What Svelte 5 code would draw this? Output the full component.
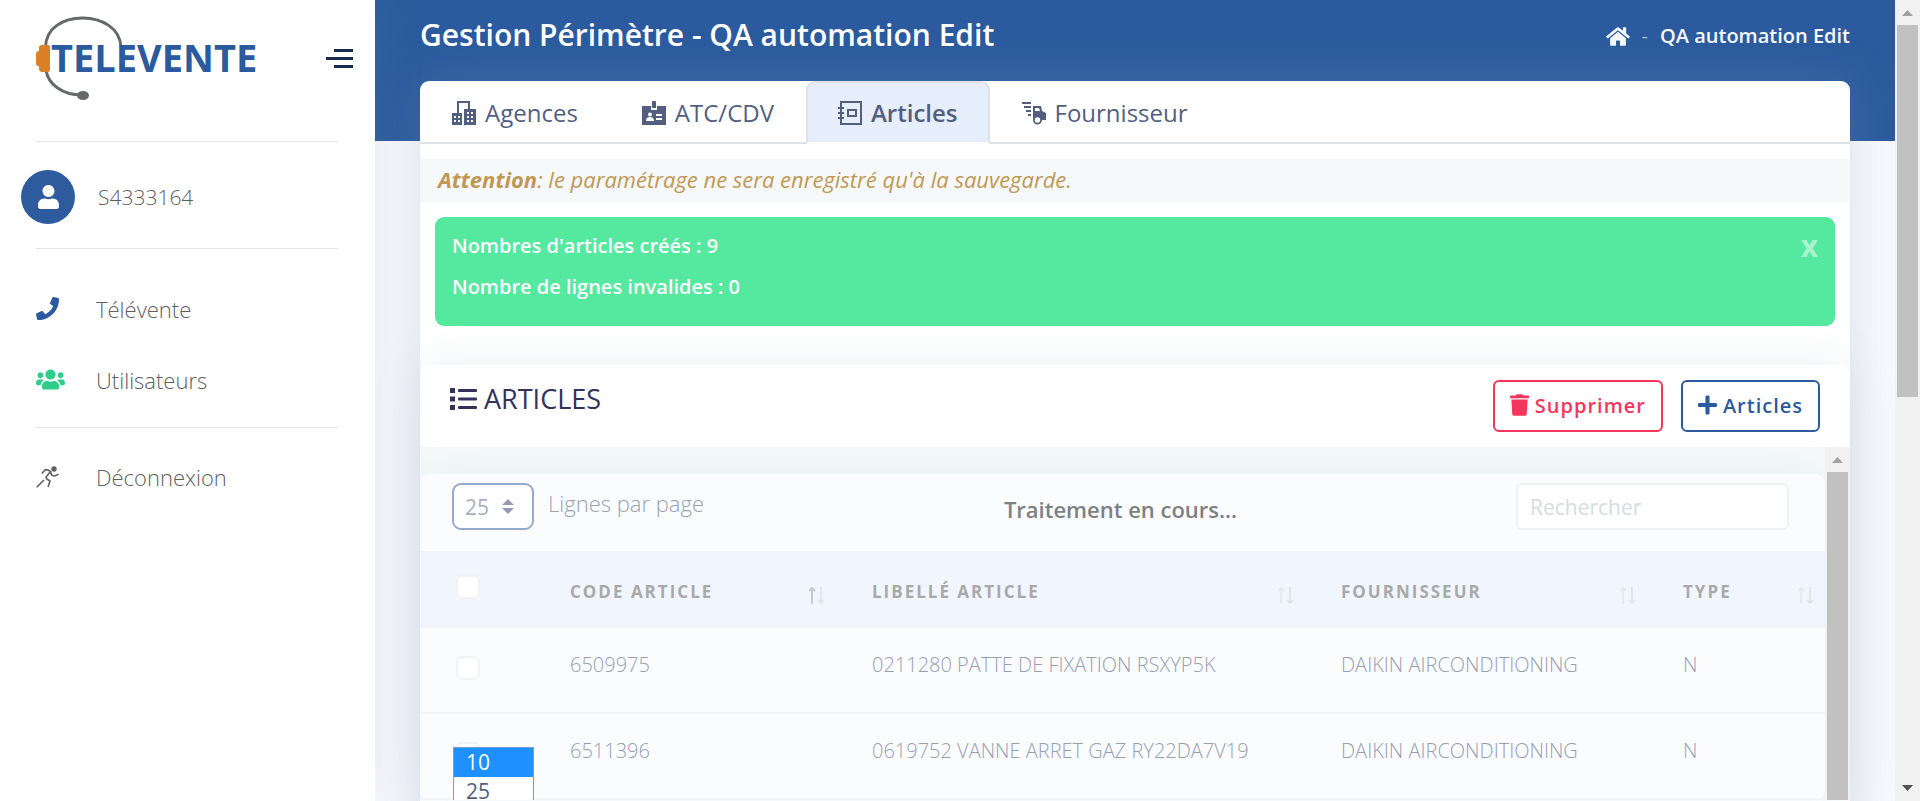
<script>
  const columns = [
    { label: 'Code article', active: true },
    { label: 'Libellé article' },
    { label: 'Fournisseur' },
    { label: 'Type' }
  ];
  const rows = [
    ['6509975', '0211280 PATTE DE FIXATION RSXYP5K', 'DAIKIN AIRCONDITIONING', 'N'],
    ['6511396', '0619752 VANNE ARRET GAZ RY22DA7V19', 'DAIKIN AIRCONDITIONING', 'N']
  ];
  let size = $state('25');
</script>

{#snippet check(id, label)}
  <input class="check" type="checkbox" {id} aria-label={label} />
{/snippet}

<div class="app">
  <aside class="sidebar">
    <div class="brand">
      <svg class="logo" viewBox="0 0 220 86" role="img" aria-label="Televente">
        <path d="M9.500 31C10 12 27 2 46.500 2S84 12 85 31" fill="none" stroke="#666869" stroke-width="3" />
        <path d="M10 54C12 68 26 79 46 79" fill="none" stroke="#666869" stroke-width="3" />
        <ellipse cx="47" cy="79.500" rx="6" ry="4.500" fill="#666869" />
        <path d="M6 29h6q2 0 2 2v22q0 3-2 3H6q-3 0-3-4v-2H2q-2 0-2-3V38q0-3 3-3v-3q0-3 3-3z" fill="#dc8023" />
        <text x="15" y="56">TELEVENTE</text>
      </svg>
      <button class="burger" aria-label="Menu"><i></i><i></i><i></i></button>
    </div>
    <hr />
    <a class="user" href="#profil">
      <span class="avatar">
        <svg width="21" height="24" viewBox="0 0 448 512"><path fill="#fff" d="M224 256c70.7 0 128-57.3 128-128S294.7 0 224 0 96 57.3 96 128s57.3 128 128 128zm89.600 32h-16.700c-22.200 10.200-46.900 16-72.900 16s-50.600-5.800-72.900-16h-16.700C60.200 288 0 348.200 0 422.400V464c0 26.500 21.500 48 48 48h352c26.500 0 48-21.500 48-48v-41.600c0-74.200-60.200-134.400-134.400-134.400z" /></svg>
      </span>
      S4333164
    </a>
    <hr />
    <nav>
      <a href="#televente">
        <span class="ico"><svg width="23" height="23" viewBox="0 0 512 512"><path fill="#2b5b9e" d="M493.4 24.6l-104-24c-11.300-2.600-22.900 3.300-27.500 13.900l-48 112c-4.200 9.800-1.400 21.300 6.900 28l60.600 49.600c-36 76.700-98.900 140.500-177.200 177.200l-49.600-60.600c-6.800-8.300-18.200-11.100-28-6.900l-112 48C3.900 366.500-2 378.100.6 389.400l24 104C27.100 504.200 36.700 512 48 512c256.100 0 464-207.500 464-464 0-11.200-7.700-20.900-18.600-23.400z" /></svg></span>
        Télévente
      </a>
      <a href="#utilisateurs">
        <span class="ico"><svg width="29" height="23" viewBox="0 0 640 512"><path fill="#2dce89" d="M96 224c35.300 0 64-28.700 64-64s-28.700-64-64-64-64 28.700-64 64 28.700 64 64 64zm448 0c35.300 0 64-28.700 64-64s-28.700-64-64-64-64 28.700-64 64 28.700 64 64 64zm32 32h-64c-17.600 0-33.500 7.100-45.100 18.600 40.300 22.100 68.900 62 75.100 109.400h66c17.700 0 32-14.300 32-32v-32c0-35.300-28.700-64-64-64zm-256 0c61.900 0 112-50.100 112-112S381.900 32 320 32 208 82.100 208 144s50.100 112 112 112zm76.800 32h-8.300c-20.800 10-43.900 16-68.500 16s-47.600-6-68.500-16h-8.300C179.600 288 128 339.600 128 403.200V432c0 26.500 21.500 48 48 48h288c26.500 0 48-21.500 48-48v-28.800c0-63.600-51.600-115.200-115.200-115.200zm-223.700-13.400C161.500 263.100 145.600 256 128 256H64c-35.300 0-64 28.700-64 64v32c0 17.700 14.300 32 32 32h65.900c6.300-47.400 34.900-87.300 75.200-109.400z" /></svg></span>
        Utilisateurs
      </a>
    </nav>
    <hr />
    <nav class="out">
      <a href="#deconnexion">
        <span class="ico"><svg width="23" height="22" viewBox="0 0 23 22" fill="none" stroke="#606060" stroke-width="1.600"><circle cx="18" cy="3" r="2.700" fill="#606060" stroke="none" /><path d="M6 7.500 8.500 4.500Q10 3 12 4L14.500 5.500 10.500 10.500Q9.500 12 11 13L14 15 12 21M14.500 5.500 15.500 9 18 10Q20 10 22.500 8M8 14 .7 21.300" /></svg></span>
        Déconnexion
      </a>
    </nav>
  </aside>

  <main>
    <header class="top">
      <h1>Gestion Périmètre - QA automation Edit</h1>
      <div class="crumbs">
        <a href="#accueil" aria-label="Accueil"><svg width="24" height="21" viewBox="0 0 576 512"><path fill="#f6f9fc" d="M280.370 148.260L96 300.110V464a16 16 0 0 0 16 16l112.060-.29a16 16 0 0 0 15.920-16V368a16 16 0 0 1 16-16h64a16 16 0 0 1 16 16v95.640a16 16 0 0 0 16 16.050L464 480a16 16 0 0 0 16-16V300L295.670 148.260a12.190 12.190 0 0 0-15.300 0zM571.600 251.470L488 182.560V44.050a12 12 0 0 0-12-12h-56a12 12 0 0 0-12 12v72.610L318.470 43a48 48 0 0 0-61 0L4.340 251.470a12 12 0 0 0-1.600 16.900l25.500 31A12 12 0 0 0 45.150 301l235.220-193.740a12.190 12.190 0 0 1 15.300 0L530.900 301a12 12 0 0 0 16.900-1.600l25.500-31a12 12 0 0 0-1.700-16.930z" /></svg></a>
        <span class="dash">-</span>
        <a href="#edit">QA automation Edit</a>
      </div>
    </header>

    <section class="card">
      <div class="tabs">
        <a href="#agences"><svg width="24" height="24" viewBox="0 0 24 24" fill="#525f7f"><path fill-rule="evenodd" d="M0 12h10v12H0zM2 15v2h2v-2zM6 15v2h2v-2zM2 19v2h2v-2zM6 19v2h2v-2zM12 8h8h4v16H12zM15 11v2h2v-2zM19 11v2h2v-2zM15 15v2h2v-2zM19 15v2h2v-2zM15 19v2h2v-2zM19 19v2h2v-2z" /><path d="M6 12V1h11v7" fill="none" stroke="#525f7f" stroke-width="2" /></svg>Agences</a>
        <a href="#atc"><svg width="24" height="24" viewBox="0 0 24 24"><path fill="#525f7f" d="M0 5h9v4h6V5h9v19H0zM10 1q0-1 1-1h2q1 0 1 1v6h-4z" /><circle cx="8" cy="13.500" r="2" fill="#fff" /><path fill="#fff" d="M4 20q0-4 4-4t4 4zM14 13h6v2h-6zM14 17h6v2h-6z" /></svg>ATC/CDV</a>
        <a href="#articles" class="active"><svg width="24" height="24" viewBox="0 0 24 24" fill="none" stroke="#525f7f" stroke-width="2"><path d="M3 1h20v22H3zM10 9h8v6h-8zM0 7h6M0 12h6M0 17h6" /></svg>Articles</a>
        <a href="#fournisseur"><svg width="24" height="24" viewBox="0 0 24 24"><path fill="#525f7f" d="M0 1h9v2H0zM2 5h7v2H2zM4 9h5v2H4zM6 13h3v2H6zM11 5h8l1 5 4 2v7h-4a4.500 4.500 0 0 1-9 0z" /><path fill="#fff" d="M13 7h4l1 3h-5z" /><circle cx="15.500" cy="19" r="2.700" fill="#fff" /></svg>Fournisseur</a>
      </div>

      <p class="warning"><strong>Attention</strong>: le paramétrage ne sera enregistré qu'à la sauvegarde.</p>

      <div class="alert" role="status">
        <div>
          <p>Nombres d'articles créés : 9</p>
          <p>Nombre de lignes invalides : 0</p>
        </div>
        <button aria-label="Fermer">x</button>
      </div>

      <section class="panel">
        <div class="panel-head">
          <h2><svg width="27" height="22" viewBox="0 0 27 22" fill="#32325d"><path d="M0 0h5v5H0zM0 8.500h5v5H0zM0 17h5v5H0z" /><rect x="8" y="1" width="19" height="3" rx="1" /><rect x="8" y="9.500" width="19" height="3" rx="1" /><rect x="8" y="18" width="19" height="3" rx="1" /></svg>ARTICLES</h2>
          <div class="actions">
            <button class="danger"><svg width="19" height="22" viewBox="0 0 448 512"><path fill="currentColor" d="M432 32H312l-9.400-18.700A24 24 0 0 0 281.100 0H166.800a23.720 23.720 0 0 0-21.400 13.300L136 32H16A16 16 0 0 0 0 48v32a16 16 0 0 0 16 16h416a16 16 0 0 0 16-16V48a16 16 0 0 0-16-16zM53.200 467a48 48 0 0 0 47.900 45h245.800a48 48 0 0 0 47.900-45L416 128H32z" /></svg>Supprimer</button>
            <button class="primary"><svg width="19" height="22" viewBox="0 0 448 512"><path fill="currentColor" d="M416 208H272V64c0-17.670-14.330-32-32-32h-32c-17.670 0-32 14.330-32 32v144H32c-17.670 0-32 14.330-32 32v32c0 17.670 14.330 32 32 32h144v144c0 17.670 14.330 32 32 32h32c17.670 0 32-14.330 32-32V304h144c17.670 0 32-14.330 32-32v-32c0-17.670-14.330-32-32-32z" /></svg>Articles</button>
          </div>
        </div>

        <div class="scroller">
          <div class="view">
            <div class="list">
              <div class="tools">
                <div class="length">
                  <div class="select">
                    <select id="size" bind:value={size}>
                      <option>10</option>
                      <option>25</option>
                    </select>
                    <svg width="12" height="15" viewBox="0 0 12 15" fill="#9898b0"><path d="M6 0l6 6H0zM6 15l6-6H0z" /></svg>
                    <ul class="menu">
                      <li class="on">10</li>
                      <li>25</li>
                    </ul>
                  </div>
                  <label for="size">Lignes par page</label>
                </div>
                <p class="busy">Traitement en cours...</p>
                <div class="search"><input type="search" placeholder="Rechercher" aria-label="Rechercher" /></div>
              </div>
              <table>
                <colgroup><col class="c0" /><col class="c1" /><col class="c2" /><col class="c3" /><col class="c4" /></colgroup>
                <thead>
                  <tr>
                    <th>{@render check('all', 'Tout sélectionner')}</th>
                    {#each columns as c}
                      <th>
                        <div class="th">
                          {c.label}
                          <svg width="16" height="17" viewBox="0 0 16 17" fill="none" stroke-width="2">
                            <path d="M3 17V1M0 4l3-3 3 3" stroke={c.active ? '#c6c9ce' : '#e6e9ee'} />
                            <path d="M12 0v16M9 13l3 3 3-3" stroke="#e2e5ea" />
                          </svg>
                        </div>
                      </th>
                    {/each}
                  </tr>
                </thead>
                <tbody>
                  {#each rows as r}
                    <tr>
                      <td>{@render check(r[0], r[0])}</td>
                      {#each r as cell}<td>{cell}</td>{/each}
                    </tr>
                  {/each}
                </tbody>
              </table>
            </div>
          </div>
          <div class="bar"><i class="up"></i><i class="thumb"></i></div>
        </div>
      </section>
    </section>
  </main>
  <div class="bar page-bar"><i class="up"></i><i class="thumb"></i><i class="down"></i></div>
</div>

<style>
  :global(body) { margin: 0; }
  * { box-sizing: border-box; }
  .app {
    display: flex;
    height: 100vh;
    overflow: hidden;
    background: #f8f9fe;
    color: #525f7f;
    font-family: "Open Sans", sans-serif;
    font-size: 24px;
    line-height: 36px;
  }
  a { color: inherit; text-decoration: none; }
  p, h1, h2, ul { margin: 0; padding: 0; }
  svg { flex: none; display: block; }
  button { font-family: inherit; cursor: pointer; }

  .sidebar {
    position: relative;
    z-index: 2;
    flex: none;
    width: 375px;
    background: #fff;
    box-shadow: 0 0 48px rgba(136, 152, 170, 0.15);
    color: #606060;
    font-size: 22px;
    font-weight: 300;
  }
  .brand { display: flex; align-items: center; justify-content: space-between; height: 117px; padding: 0 22px 0 36px; margin-bottom: 24px; }
  .logo { width: 220px; height: 86px; }
  .logo text { font-size: 38px; font-weight: 700; fill: #2b5b9e; }
  .burger { display: flex; flex-direction: column; align-items: flex-end; gap: 5px; padding: 0; border: 0; background: none; }
  .burger i { width: 19px; height: 3px; background: #172b4d; }
  .burger i:nth-child(2) { width: 27px; }
  hr { height: 1px; margin: 0 37px 0 36px; border: 0; background: #e4e4e4; }
  .user { display: flex; align-items: center; gap: 23px; padding: 28px 21px 24px; font-size: 21px; }
  .avatar { display: grid; place-items: center; width: 54px; height: 54px; border-radius: 50%; background: #2d5b9e; }
  nav { padding: 24px 0 12px 36px; }
  nav.out { padding-top: 13px; }
  nav a { display: flex; align-items: center; height: 71px; }
  .ico { width: 60px; }

  main { flex: 1; min-width: 0; padding: 0 45px; background: linear-gradient(#2b5b9e 141px, transparent 141px); }
  .top { display: flex; align-items: center; justify-content: space-between; height: 81px; padding-bottom: 11px; }
  h1 { color: #fff; font-size: 30px; font-weight: 600; }
  .crumbs { display: flex; align-items: center; gap: 12px; padding-top: 2px; color: #f6f9fc; font-size: 20px; font-weight: 600; }
  .dash { color: #adb5bd; font-weight: 400; }

  .card { height: 100%; border-radius: 9px 9px 0 0; background: #fff; box-shadow: 0 0 48px rgba(136, 152, 170, 0.25); }
  .tabs { display: flex; height: 63px; border-bottom: 2px solid #dee2e6; }
  .tabs a { display: flex; align-items: center; gap: 9px; height: 63px; padding: 0 30px; border: 2px solid transparent; border-radius: 9px 9px 0 0; }
  .tabs .active { border-color: #dee2e6 #dee2e6 #fff; background: #e6edfb; font-weight: 600; }
  .warning { margin-top: 15px; padding: 2px 18px 5px; background: #f6f9fc; color: #c09853; font-size: 22px; font-style: italic; }
  .alert { display: flex; justify-content: space-between; align-items: flex-start; margin: 15px 15px 39px; padding: 11px 17px 16px; border-radius: 9px; background: #55e89f; color: #fff; font-size: 20px; font-weight: 600; }
  .alert p { margin-bottom: 5px; }
  .alert button { padding: 0; border: 0; background: none; color: rgba(255, 255, 255, 0.5); font-size: 30px; font-weight: 700; line-height: 36px; }

  .panel { border-radius: 9px; box-shadow: 0 0 48px rgba(136, 152, 170, 0.15); background: #fff; }
  .panel-head { display: flex; justify-content: space-between; align-items: flex-start; height: 82px; padding: 15px 30px; }
  h2 { display: flex; align-items: center; gap: 7px; height: 38px; color: #32325d; font-size: 27px; font-weight: 400; }
  .actions { display: flex; gap: 18px; }
  .actions button { display: flex; align-items: center; gap: 6px; height: 52px; padding: 0 15px 2px; border: 2px solid currentColor; border-radius: 6px; background: #fff; font-size: 20px; font-weight: 600; letter-spacing: 1px; }
  .danger { color: #f5365c; }
  .primary { color: #2b5b9e; }

  .scroller { display: flex; background: #f6fafc; }
  .view { flex: 1; min-width: 0; padding-top: 27px; overflow: hidden; }
  .list { border-radius: 9px; background: #fbfcfe; box-shadow: 0 0 48px rgba(136, 152, 170, 0.15); }
  .tools { display: grid; grid-template-columns: 1fr auto 1fr; align-items: start; height: 77px; padding: 9px 36px 0 32px; }
  .length { display: flex; gap: 14px; color: #a8afbf; font-size: 21px; }
  .length label { margin-top: 2px; font-size: 22px; font-weight: 300; color: #9aa1b4; }
  .select { position: relative; }
  select, .search input { height: 47px; border: 2px solid #eff1f3; border-radius: 6px; background: #fff; font-family: inherit; font-size: 21px; }
  select { appearance: none; display: block; width: 82px; padding: 0 11px; border-color: #94abcf; border-radius: 9px; color: #a8afbf; }
  .select > svg { position: absolute; top: 16px; left: 50px; pointer-events: none; }
  .menu { position: absolute; z-index: 3; top: 264px; left: 1px; width: 81px; list-style: none; border: 1px solid #7a9cd6; background: #fff; color: #525f7f; line-height: 28px; }
  .menu li { padding-left: 12px; }
  .menu .on { padding-bottom: 1px; background: #1e90ff; color: #fff; }
  .busy { margin-top: 8px; color: #7f8081; font-size: 22px; font-weight: 600; }
  .search { justify-self: end; }
  .search input { width: 273px; padding: 0 12px; }
  .search input::placeholder { color: #d8dbe0; opacity: 1; }

  table { width: 100%; table-layout: fixed; border-collapse: separate; border-spacing: 0; }
  .c0 { width: 114px; }
  .c1 { width: 302px; }
  .c2 { width: 469px; }
  .c3 { width: 342px; }
  th { height: 77px; padding: 6px 11px 0 36px; border-top: 2px solid #f1f4f8; border-bottom: 4px solid #f3f5f8; background: #f1f6fe; color: #a9a9a9; font-size: 17px; font-weight: 700; letter-spacing: 2px; text-align: left; text-transform: uppercase; }
  td { height: 86px; padding: 0 0 10px 36px; border-bottom: 2px solid #f3f5f8; color: #979eb3; font-size: 20px; font-weight: 300; white-space: nowrap; }
  th:first-child { padding-top: 0; padding-bottom: 4px; }
  td:first-child { padding-bottom: 4px; }
  .th { display: flex; align-items: center; justify-content: space-between; }
  .th svg { margin-top: 8px; }
  .check { appearance: none; display: block; width: 24px; height: 24px; margin: 0; border: 2px solid #f0f1f3; border-radius: 6px; background: #fff; }

  .bar { display: flex; flex-direction: column; align-items: center; flex: none; width: 25px; background: #f1f1f1; }
  .up, .down { width: 11px; height: 6px; background: #a3a3a3; clip-path: polygon(50% 0, 100% 100%, 0 100%); }
  .up { margin: 10px 0 9px; flex: none; }
  .down { margin: auto 0 10px; background: #505050; clip-path: polygon(0 0, 100% 0, 50% 100%); }
  .thumb { flex: 1; width: 21px; background: #c1c1c1; }
  .page-bar .thumb { flex: 0 0 372px; }
</style>
